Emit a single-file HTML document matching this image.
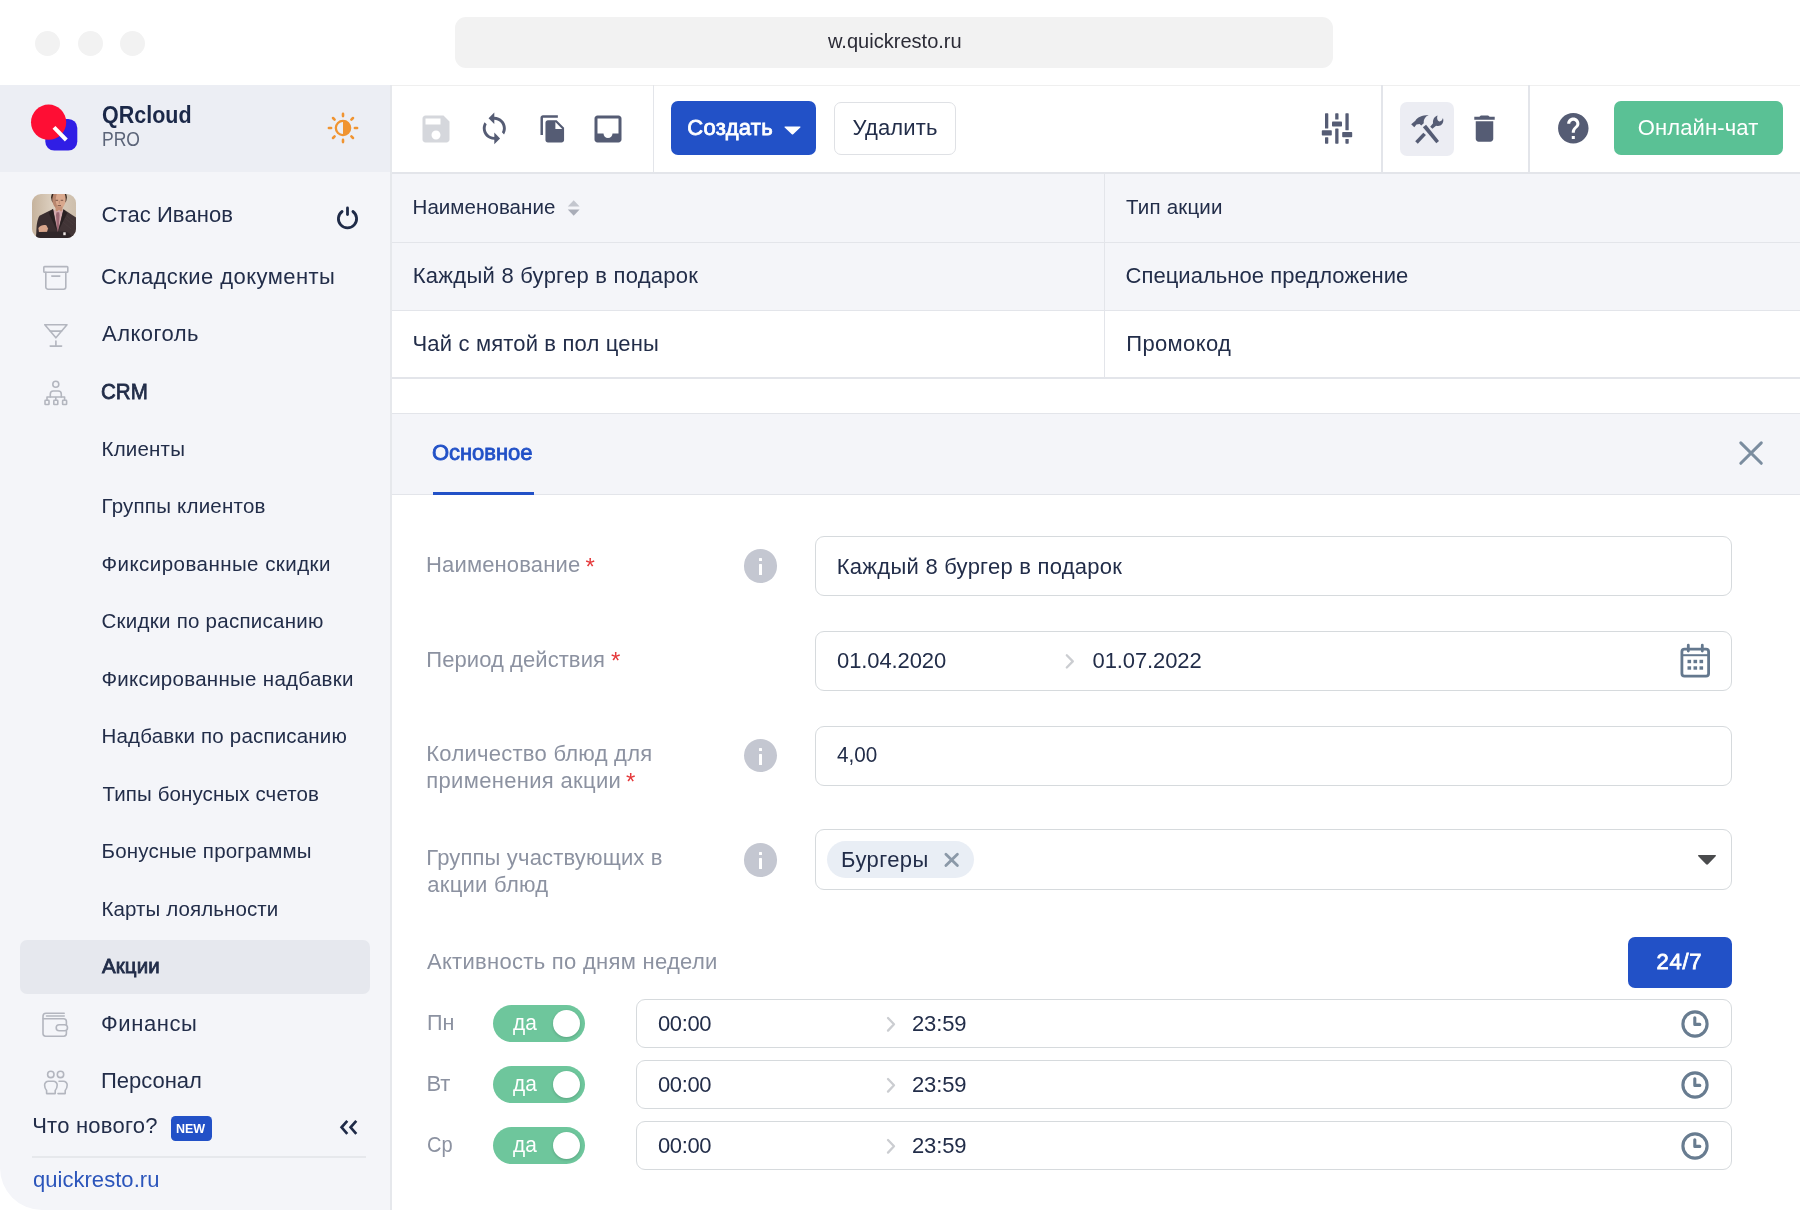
<!DOCTYPE html>
<html lang="ru">
<head>
<meta charset="utf-8">
<title>Quick Resto — Акции</title>
<style>
*{box-sizing:border-box}
html,body{margin:0;padding:0}
body{width:1800px;height:1211px;position:relative;overflow:hidden;background:#fff;font-family:"Liberation Sans",sans-serif;color:#222d49}
.a{position:absolute}
.t{position:absolute;white-space:pre;line-height:30px;display:block}
.txt{position:absolute;left:0;top:0;width:1800px;height:1211px;will-change:transform}
.dot{position:absolute;width:25px;height:25px;border-radius:50%;background:#f2f2f2;top:30.5px}
.url{position:absolute;left:455px;top:17px;width:878px;height:50.500px;border-radius:11px;background:#f2f2f2}
.sidebar{position:absolute;left:0;top:85px;width:392px;height:1125px;background:#f4f5f9;border-right:2px solid #e6e8ec;border-bottom-left-radius:42px;overflow:hidden}
.sidehead{position:absolute;left:0;top:0;width:390px;height:87px;background:#eceef4}
.active{position:absolute;left:20px;top:940px;width:350px;height:54px;border-radius:7px;background:#e6e8ee}
.hline{position:absolute;height:1.5px;background:#e3e5ea}
.vline{position:absolute;width:1.5px;background:#e3e5ea}
.btn{position:absolute;border-radius:7px}
.inp{position:absolute;left:815px;width:917px;border:1.8px solid #d6dadd;border-radius:9px;background:#fff}
.tinp{position:absolute;left:636px;width:1096px;height:49.5px;border:1.8px solid #d6dadd;border-radius:9px;background:#fff}
.tog{position:absolute;left:493px;width:91.5px;height:36.5px;border-radius:19px;background:#6ec69c}
.knob{position:absolute;left:59.5px;top:4.5px;width:27.5px;height:27.5px;border-radius:50%;background:#fff;box-shadow:0 1px 3px rgba(0,0,0,.18)}
.info{position:absolute;left:743.8px;width:33.6px;height:33.6px;border-radius:50%;background:#c4c7d1}
.info i{position:absolute;left:15.1px;width:3.5px;background:#fff;border-radius:.5px}
svg{position:absolute;overflow:visible}

</style>
</head>
<body>
<!-- browser chrome -->
<div class="dot" style="left:35px"></div><div class="dot" style="left:77.5px"></div><div class="dot" style="left:119.5px"></div>
<div class="url"></div>
<div class="hline" style="left:0;top:84.5px;width:1800px;height:1px;background:#efefef"></div>

<!-- sidebar -->
<div class="sidebar"><div class="sidehead"></div></div>
<div class="active"></div>
<!-- logo -->
<svg style="left:28px;top:100px" width="56" height="56" viewBox="28 100 56 56">
  <rect x="45.300" y="118.900" width="32" height="31.700" rx="9" fill="#301ee5"/>
  <circle cx="48.600" cy="122.200" r="17.600" fill="#fe0e34"/>
  <path d="M54 127.400L66.300 140" stroke="#fff" stroke-width="4" stroke-linecap="butt"/>
</svg>
<!-- sun -->
<svg style="left:326px;top:111.400px" width="34" height="34" viewBox="-17 -17 34 34">
  <g stroke="#f09431" stroke-linecap="round" fill="none">
    <circle r="7.150" stroke-width="2.300"/>
    <path d="M0.00 -11.90L0.00 -14.10M8.41 -8.41L9.97 -9.97M11.90 -0.00L14.10 -0.00M8.41 8.41L9.97 9.97M0.00 11.90L0.00 14.10M-8.41 8.41L-9.97 9.97M-11.90 0.00L-14.10 0.00M-8.41 -8.41L-9.97 -9.97" stroke-width="2.600"/>
  </g>
  <path d="M0 -7A7 7 0 0 1 0 7Z" fill="#f09431"/>
</svg>
<!-- avatar -->
<svg style="left:32px;top:194px" width="44" height="44" viewBox="0 0 44 44">
  <defs>
    <clipPath id="avc"><rect width="44" height="44" rx="9"/></clipPath>
    <linearGradient id="avg" x1="0" y1="0" x2="1" y2="0"><stop offset="0" stop-color="#c6b39d"/><stop offset=".45" stop-color="#dccfbf"/><stop offset="1" stop-color="#cdbeac"/></linearGradient>
  </defs>
  <g clip-path="url(#avc)">
    <rect width="44" height="44" fill="url(#avg)"/>
    <ellipse cx="27" cy="3.500" rx="7.900" ry="8" fill="#3a2921"/>
    <path d="M21.600 0H32.800C33.800 3 34 6 33.300 8.500C32.500 12 30 15.300 27.200 15.600C24.200 15.300 21.600 12 20.700 8.500C20.100 6 20.500 3 21.600 0Z" fill="#d9a88d"/>
    <path d="M21.600 0C20.500 3 20.100 6 20.700 8.500C21.600 12 24.200 15.300 27.200 15.600C25.200 13 23.800 10 23.800 6C23.800 3.500 24.300 1.500 24.800 0Z" fill="#9c6a55" opacity=".55"/>
    <path d="M23.600 6.300h2.500M28.700 6.300h2.500M25.700 11.600h3.300" stroke="#4a2e26" stroke-width=".9" opacity=".75" fill="none"/>
    <path d="M27.300 6.800v3" stroke="#a8745f" stroke-width=".8" opacity=".7"/>
    <rect x="23.500" y="12.500" width="7" height="6" fill="#c48f76"/>
    <path d="M21.400 15.600L25 17.500L27 15.800L29 17.500L31.200 15.600L32.500 24L26 40L19.500 24Z" fill="#d3a9ad"/>
    <path d="M24.600 18.300H27.200L27.600 21L26.600 38H25L24 21Z" fill="#9d6874"/>
    <path d="M21 15L7.500 21.800C5.300 25 4 32 4.300 44H26L25.500 37Z" fill="#3a2e30"/>
    <path d="M31.500 15.300L44 23.500V44H26V37Z" fill="#413436"/>
    <path d="M21 15L16.800 19L24.800 36.500Z" fill="#292022"/>
    <path d="M31.500 15.300L35.200 19L26.600 36.500Z" fill="#292022"/>
    <path d="M33 24L41 31M31 28L39 35M35 22L43.500 29.500" stroke="#57484b" stroke-width=".5" opacity=".7"/>
    <path d="M6.400 34C8 31.500 12 30.500 14.500 31.500L16 34.500L15 38L7 38.500Z" fill="#d8a58b"/>
    <path d="M4 44C4 40 5 38.500 7 38L32 37.500C36 37.500 39 40 40 44Z" fill="#30272a"/>
    <rect x="31.300" y="38.300" width="2.400" height="2.900" fill="#efe9e6"/>
  </g>
</svg>
<!-- power -->
<svg style="left:335px;top:205.500px" width="25" height="25" viewBox="-12.500 -12.500 25 25">
  <path d="M-5.400 -7A9.100 9.100 0 1 0 5.400 -7" fill="none" stroke="#1f2b48" stroke-width="2.800" stroke-linecap="round"/>
  <path d="M0 -10.600V-4" stroke="#1f2b48" stroke-width="2.800" stroke-linecap="round"/>
</svg>
<!-- sidebar icons -->
<svg style="left:40px;top:262px" width="32" height="32" viewBox="40 262 32 32" fill="none" stroke="#b3b6bf" stroke-width="1.600" stroke-linejoin="round" stroke-linecap="round">
  <rect x="43.800" y="266.600" width="24" height="5.600" rx=".8"/>
  <path d="M45.800 272.400V287a2.200 2.200 0 0 0 2.200 2.200h15.600a2.200 2.200 0 0 0 2.200-2.200V272.400"/>
  <path d="M51.800 276.100h8"/>
</svg>
<svg style="left:40px;top:320px" width="32" height="32" viewBox="40 320 32 32" fill="none" stroke="#b3b6bf" stroke-width="1.600" stroke-linejoin="round" stroke-linecap="round">
  <path d="M44.800 324.700H67L55.900 337.800z"/>
  <path d="M50.200 331.100H61.600"/>
  <path d="M55.900 341V346M50.200 346.100H61.600"/>
</svg>
<svg style="left:40px;top:378px" width="32" height="32" viewBox="40 378 32 32" fill="none" stroke="#b3b6bf" stroke-width="1.600" stroke-linejoin="round" stroke-linecap="round">
  <circle cx="55.800" cy="384.300" r="3"/>
  <path d="M50.300 397V394a3 3 0 0 1 3-3h5a3 3 0 0 1 3 3V397"/>
  <path d="M47 400V397H64.600V400M55.800 397V400"/>
  <rect x="45" y="400.300" width="4" height="4.200" rx=".6"/><rect x="53.800" y="400.300" width="4" height="4.200" rx=".6"/><rect x="62.600" y="400.300" width="4" height="4.200" rx=".6"/>
</svg>
<svg style="left:40px;top:1008px" width="32" height="32" viewBox="40 1008 32 32" fill="none" stroke="#b3b6bf" stroke-width="1.600" stroke-linejoin="round" stroke-linecap="round">
  <path d="M64.200 1013.300H46a3 3 0 0 0-3 3V1033.600a2.600 2.600 0 0 0 2.600 2.600H63.800a2.600 2.600 0 0 0 2.600-2.600V1031"/>
  <path d="M46.500 1016H64.200"/>
  <path d="M43.200 1018.700H63.600a2.800 2.800 0 0 1 2.800 2.800V1024.600"/>
  <rect x="56.200" y="1024.800" width="11.300" height="6" rx="3"/>
</svg>
<svg style="left:40px;top:1066px" width="32" height="32" viewBox="40 1066 32 32" fill="none" stroke="#b3b6bf" stroke-width="1.600" stroke-linejoin="round" stroke-linecap="round">
  <circle cx="50.800" cy="1074.400" r="3.200"/><circle cx="60.500" cy="1074.400" r="3.200"/>
  <path d="M46.600 1093.600H55.200V1090.500C56.600 1089 57.200 1087 57.200 1085a3.800 3.800 0 0 0-3.800-3.800H48.400A3.800 3.800 0 0 0 44.600 1085c0 2 .6 4 2 5.500z"/>
  <path d="M59 1081.200H63.400A3.800 3.800 0 0 1 67.200 1085c0 2-.6 4-2 5.500V1093.600H58"/>
</svg>
<!-- sidebar footer -->
<div class="a" style="left:170.500px;top:1115.500px;width:41px;height:25px;border-radius:4.500px;background:#2251c7"></div>
<svg style="left:338px;top:1118px" width="22" height="18" viewBox="338 1118 22 18" fill="none" stroke="#1f2b48" stroke-width="2.700" stroke-linecap="butt" stroke-linejoin="miter">
  <path d="M347.300 1120.800L341.600 1127.300L347.300 1133.800M356.300 1120.800L350.600 1127.300L356.300 1133.800"/>
</svg>
<div class="hline" style="left:32px;top:1155.500px;width:334px;height:2px;background:#e6e8ec"></div>

<!-- toolbar -->
<div class="hline" style="left:392px;top:172.200px;width:1408px;height:1.800px"></div>
<div class="vline" style="left:652.500px;top:85px;height:87px"></div>
<div class="vline" style="left:1381px;top:85px;height:87px"></div>
<div class="vline" style="left:1528px;top:85px;height:87px"></div>
<svg style="left:418px;top:110.500px" width="36" height="36" viewBox="0 0 24 24" fill="#d5d7dc"><path d="M17 3H5c-1.110 0-2 .9-2 2v14c0 1.100.890 2 2 2h14c1.100 0 2-.9 2-2V7l-4-4zm-5 16c-1.660 0-3-1.340-3-3s1.340-3 3-3 3 1.340 3 3-1.340 3-3 3zm3-10H5V5h10v4z"/></svg>
<svg style="left:477.300px;top:111px" width="34.600" height="34.600" viewBox="0 0 24 24" fill="#555c74"><path d="M12 4V1L8 5l4 4V6c3.310 0 6 2.690 6 6 0 1.010-.25 1.970-.7 2.800l1.460 1.460C19.540 15.030 20 13.570 20 12c0-4.420-3.580-8-8-8zm0 14c-3.310 0-6-2.690-6-6 0-1.010.25-1.970.7-2.800L5.240 7.740C4.460 8.970 4 10.430 4 12c0 4.420 3.580 8 8 8v3l4-4-4-4v3z"/></svg>
<svg style="left:537.800px;top:113.800px" width="29.800" height="29.800" viewBox="0 0 24 24" fill="#555c74"><path d="M16 1H4c-1.100 0-2 .9-2 2v14h2V3h12V1zm-1 4l6 6v10c0 1.100-.9 2-2 2H7.990C6.890 23 6 22.100 6 21l.010-14c0-1.100.890-2 1.990-2h7zm-1 7h5.500L14 6.500V12z"/></svg>
<svg style="left:590px;top:110.800px" width="36" height="36" viewBox="0 0 24 24" fill="#555c74"><path d="M19 3H4.990c-1.110 0-1.980.9-1.980 2L3 19c0 1.100.880 2 1.990 2H19c1.100 0 2-.9 2-2V5c0-1.100-.9-2-2-2zm0 12h-4c0 1.660-1.350 3-3 3s-3-1.340-3-3H4.990V5H19v10z"/></svg>
<div class="btn" style="left:671px;top:101.400px;width:145.200px;height:53.700px;background:#2251c7"></div>
<svg style="left:783.500px;top:125.500px" width="17" height="9" viewBox="0 0 17 9"><path d="M1.200 .4h14.600c.7 0 1 .7.500 1.200L9.200 8.300c-.4.400-1 .4-1.400 0L.7 1.600C.2 1.100.5.400 1.200.4z" fill="#fff"/></svg>
<div class="btn" style="left:833.500px;top:101.500px;width:122.700px;height:53.600px;background:#fff;border:1.600px solid #dfe1e5"></div>
<!-- sliders -->
<svg style="left:1320px;top:112px" width="34" height="34" viewBox="1320 112 34 34" fill="#555c74">
  <rect x="1325" y="113.300" width="3.300" height="15.200" rx=".6"/><rect x="1325" y="137.200" width="3.300" height="6.500" rx=".6"/><rect x="1321.800" y="130.300" width="10" height="5.200" rx=".8"/>
  <rect x="1335.200" y="113.300" width="3.300" height="6.200" rx=".6"/><rect x="1335.200" y="128.500" width="3.300" height="15.200" rx=".6"/><rect x="1332" y="121.400" width="10" height="5.200" rx=".8"/>
  <rect x="1345.400" y="113.300" width="3.300" height="17" rx=".6"/><rect x="1345.400" y="139" width="3.300" height="4.700" rx=".6"/><rect x="1342.200" y="132" width="10" height="5.200" rx=".8"/>
</svg>
<div class="btn" style="left:1399.500px;top:101.500px;width:54px;height:54px;background:#ecedf3"></div>
<svg style="left:1400px;top:105px" width="55" height="47" viewBox="0 0 1417 1211" fill="#555c74">
  <path d="M288 495L395 405C440 330 560 262 738 260C655 300 605 365 612 470L548 528L505 490L425 502L368 572Z"/>
  <path d="M590 572L672 508L1005 925L935 988Z"/>
  <path d="M778 562L852 468C838 380 880 300 968 268C945 330 955 398 1010 424C1060 430 1092 392 1106 338C1136 420 1102 500 1040 530C1000 546 962 542 930 536L835 612Z"/>
  <path d="M392 932L600 712L668 776L458 1000Z"/>
</svg>
<svg style="left:1466.500px;top:110.800px" width="35" height="35" viewBox="0 0 24 24" fill="#555c74"><path d="M6 19c0 1.100.9 2 2 2h8c1.100 0 2-.9 2-2V7H6v12zM19 4h-3.500l-1-1h-5l-1 1H5v2h14V4z"/></svg>
<svg style="left:1555px;top:110px" width="36.600" height="36.600" viewBox="0 0 24 24" fill="#555c74"><path d="M12 2C6.480 2 2 6.480 2 12s4.480 10 10 10 10-4.480 10-10S17.520 2 12 2zm1 17h-2v-2h2v2zm2.070-7.750l-.9.920C13.450 12.900 13 13.500 13 15h-2v-.5c0-1.100.45-2.100 1.170-2.830l1.240-1.260c.37-.36.590-.86.590-1.410 0-1.100-.9-2-2-2s-2 .9-2 2H8c0-2.210 1.790-4 4-4s4 1.790 4 4c0 .88-.36 1.680-.93 2.250z"/></svg>
<div class="btn" style="left:1614.100px;top:101.300px;width:169.100px;height:53.900px;background:#5ac195"></div>

<!-- table -->
<div class="a" style="left:392px;top:173.500px;width:1408px;height:136px;background:#f4f5f9"></div>
<div class="hline" style="left:392px;top:241.800px;width:1408px"></div>
<div class="hline" style="left:392px;top:309.500px;width:1408px"></div>
<div class="hline" style="left:392px;top:377px;width:1408px"></div>
<div class="vline" style="left:1103.800px;top:173px;height:204px"></div>
<svg style="left:566px;top:199px" width="15" height="18" viewBox="566 199 15 18"><path d="M573.700 200.300L579.600 206.600H567.800z" fill="#c3c6ce"/><path d="M573.700 215.700L579.600 209.400H567.800z" fill="#a9adb8"/></svg>

<!-- panel -->
<div class="a" style="left:392px;top:412.500px;width:1408px;height:82px;background:#f4f5f9;border-top:1.500px solid #e3e5ea;border-bottom:1.500px solid #e3e5ea"></div>
<div class="a" style="left:433px;top:491.500px;width:101.300px;height:3.500px;background:#2251c7"></div>
<svg style="left:1738px;top:440px" width="26" height="26" viewBox="1738 440 26 26" fill="none" stroke="#7b8d9f" stroke-width="3" stroke-linecap="round"><path d="M1740.800 442.900L1761.300 463.300M1761.300 442.900L1740.800 463.300"/></svg>

<div class="info" style="top:549.1px"><i style="top:9.100px;height:2.600px"></i><i style="top:15px;height:10.700px"></i></div>
<div class="info" style="top:738.9px"><i style="top:9.100px;height:2.600px"></i><i style="top:15px;height:10.700px"></i></div>
<div class="info" style="top:843.3px"><i style="top:9.100px;height:2.600px"></i><i style="top:15px;height:10.700px"></i></div>

<div class="inp" style="top:536px;height:60.3px"></div>
<div class="inp" style="top:630.600px;height:60.3px"></div>
<div class="inp" style="top:725.500px;height:60.3px"></div>
<div class="inp" style="top:829.400px;height:60.3px"></div>
<!-- range chevron -->
<svg style="left:1064px;top:653px" width="12" height="17" viewBox="1064 653 12 17" fill="none" stroke="#cbcdd1" stroke-width="2.300" stroke-linecap="round" stroke-linejoin="round"><path d="M1066.800 655.300L1072.800 661.400L1066.800 667.500"/></svg>
<!-- calendar -->
<svg style="left:1679px;top:643px" width="33" height="36" viewBox="1679 643 33 36" fill="none" stroke="#64788e" stroke-linejoin="round">
  <rect x="1681.900" y="649.200" width="26.700" height="27" rx="2.600" stroke-width="2.800"/>
  <path d="M1688.300 645.200V651M1702.300 645.200V651" stroke-width="2.800" stroke-linecap="round"/>
  <path d="M1681.900 655.200H1708.600" stroke-width="2"/>
  <g fill="#64788e" stroke="none"><rect x="1687.500" y="659.800" width="3.600" height="3.400"/><rect x="1693.500" y="659.800" width="3.600" height="3.400"/><rect x="1699.500" y="659.800" width="3.600" height="3.400"/><rect x="1687.500" y="666.300" width="3.600" height="3.400"/><rect x="1693.500" y="666.300" width="3.600" height="3.400"/><rect x="1699.500" y="666.300" width="3.600" height="3.400"/></g>
</svg>
<!-- chip -->
<div class="a" style="left:826.800px;top:841.300px;width:147.500px;height:36.800px;border-radius:18.500px;background:#e9eef5"></div>
<svg style="left:943px;top:851px" width="17" height="17" viewBox="943 851 17 17" fill="none" stroke="#8b99a8" stroke-width="2.800" stroke-linecap="round"><path d="M945.900 854.200L957.400 865.500M957.400 854.200L945.900 865.500"/></svg>
<svg style="left:1697px;top:853.500px" width="20" height="12" viewBox="0 0 20 12"><path d="M1.800 1h16.400c.7 0 1 .7.500 1.200l-7.700 8.100c-.5.500-1.400.5-1.900 0L1.300 2.200C.8 1.700 1.100 1 1.800 1z" fill="#4a4b4d"/></svg>

<div class="btn" style="left:1627.500px;top:937px;width:104.500px;height:50.500px;background:#2251c7"></div>
<!-- weekday rows -->
<div class="tinp" style="top:998.5px"></div>
<div class="tog" style="top:1005.0px"><div class="knob"></div></div>
<svg style="left:1680px;top:1008.7px" width="30" height="30" viewBox="-15 -15 30 30" fill="none" stroke="#687c90" stroke-width="3.100" stroke-linecap="round" stroke-linejoin="round"><circle r="12.100"/><path d="M-.2 -6.300V.4H4.800"/></svg>
<svg style="left:885px;top:1015.2px" width="12" height="18" viewBox="0 0 12 18" fill="none" stroke="#cbcdd1" stroke-width="2.300" stroke-linecap="round" stroke-linejoin="round"><path d="M3 3L9 9.300L3 15.600"/></svg>
<div class="tinp" style="top:1059.5px"></div>
<div class="tog" style="top:1066.0px"><div class="knob"></div></div>
<svg style="left:1680px;top:1069.7px" width="30" height="30" viewBox="-15 -15 30 30" fill="none" stroke="#687c90" stroke-width="3.100" stroke-linecap="round" stroke-linejoin="round"><circle r="12.100"/><path d="M-.2 -6.300V.4H4.800"/></svg>
<svg style="left:885px;top:1076.2px" width="12" height="18" viewBox="0 0 12 18" fill="none" stroke="#cbcdd1" stroke-width="2.300" stroke-linecap="round" stroke-linejoin="round"><path d="M3 3L9 9.300L3 15.600"/></svg>
<div class="tinp" style="top:1120.5px"></div>
<div class="tog" style="top:1127.0px"><div class="knob"></div></div>
<svg style="left:1680px;top:1130.7px" width="30" height="30" viewBox="-15 -15 30 30" fill="none" stroke="#687c90" stroke-width="3.100" stroke-linecap="round" stroke-linejoin="round"><circle r="12.100"/><path d="M-.2 -6.300V.4H4.800"/></svg>
<svg style="left:885px;top:1137.2px" width="12" height="18" viewBox="0 0 12 18" fill="none" stroke="#cbcdd1" stroke-width="2.300" stroke-linecap="round" stroke-linejoin="round"><path d="M3 3L9 9.300L3 15.600"/></svg>

<!-- text layer -->
<div class="txt">
<span class="t" style="left:827.65px;top:26px;font-size:21px;color:#2b2b36;transform:scaleX(0.9546);transform-origin:0 0;">w.quickresto.ru</span>
<span class="t" style="left:102.00px;top:100px;font-size:23px;color:#1b2848;font-weight:700;transform:scaleX(0.9348);transform-origin:0 0;">QRcloud</span>
<span class="t" style="left:101.80px;top:124px;font-size:19.4px;color:#5b6478;transform:scaleX(0.9038);transform-origin:0 0;">PRO</span>
<span class="t" style="left:101.50px;top:200px;font-size:22px;color:#222d49;letter-spacing:0.081px;">Стас Иванов</span>
<span class="t" style="left:101.00px;top:262px;font-size:22px;color:#222d49;letter-spacing:0.433px;">Складские документы</span>
<span class="t" style="left:102.00px;top:319px;font-size:22px;color:#222d49;letter-spacing:0.465px;">Алкоголь</span>
<span class="t" style="left:101.07px;top:377px;font-size:22px;color:#222d49;-webkit-text-stroke:0.8px currentColor;transform:scaleX(0.9326);transform-origin:0 0;">CRM</span>
<span class="t" style="left:101.50px;top:434px;font-size:20.5px;color:#222d49;letter-spacing:0.206px;">Клиенты</span>
<span class="t" style="left:101.50px;top:491px;font-size:20.5px;color:#222d49;letter-spacing:0.222px;">Группы клиентов</span>
<span class="t" style="left:101.50px;top:549px;font-size:20.5px;color:#222d49;letter-spacing:0.454px;">Фиксированные скидки</span>
<span class="t" style="left:101.50px;top:606px;font-size:20.5px;color:#222d49;letter-spacing:0.262px;">Скидки по расписанию</span>
<span class="t" style="left:101.50px;top:664px;font-size:20.5px;color:#222d49;letter-spacing:0.286px;">Фиксированные надбавки</span>
<span class="t" style="left:101.50px;top:721px;font-size:20.5px;color:#222d49;letter-spacing:0.187px;">Надбавки по расписанию</span>
<span class="t" style="left:102.50px;top:779px;font-size:20.5px;color:#222d49;letter-spacing:0.115px;">Типы бонусных счетов</span>
<span class="t" style="left:101.50px;top:836px;font-size:20.5px;color:#222d49;letter-spacing:0.196px;">Бонусные программы</span>
<span class="t" style="left:101.50px;top:894px;font-size:20.5px;color:#222d49;letter-spacing:0.093px;">Карты лояльности</span>
<span class="t" style="left:102.00px;top:951px;font-size:20.5px;color:#222d49;-webkit-text-stroke:0.8px currentColor;letter-spacing:0.091px;">Акции</span>
<span class="t" style="left:101.00px;top:1009px;font-size:22px;color:#222d49;letter-spacing:0.575px;">Финансы</span>
<span class="t" style="left:101.00px;top:1066px;font-size:22px;color:#222d49;letter-spacing:-0.021px;">Персонал</span>
<span class="t" style="left:32.20px;top:1111px;font-size:22px;color:#222d49;letter-spacing:0.232px;">Что нового?</span>
<span class="t" style="left:176.00px;top:1114px;font-size:13.5px;color:#fff;font-weight:700;transform:scaleX(0.9259);transform-origin:0 0;">NEW</span>
<span class="t" style="left:32.90px;top:1165px;font-size:22px;color:#2b55bb;letter-spacing:0.049px;">quickresto.ru</span>
<span class="t" style="left:687.30px;top:113px;font-size:22px;color:#fff;-webkit-text-stroke:0.8px currentColor;letter-spacing:0.293px;">Создать</span>
<span class="t" style="left:852.50px;top:113px;font-size:22px;color:#222d49;letter-spacing:0.161px;">Удалить</span>
<span class="t" style="left:1637.70px;top:113px;font-size:22px;color:#fff;letter-spacing:0.132px;">Онлайн-чат</span>
<span class="t" style="left:412.50px;top:192px;font-size:20.5px;color:#222d49;letter-spacing:0.072px;">Наименование</span>
<span class="t" style="left:1126.00px;top:192px;font-size:20.5px;color:#222d49;letter-spacing:0.196px;">Тип акции</span>
<span class="t" style="left:412.80px;top:261px;font-size:22px;color:#222d49;letter-spacing:0.254px;">Каждый 8 бургер в подарок</span>
<span class="t" style="left:1125.50px;top:261px;font-size:22px;color:#222d49;letter-spacing:0.050px;">Специальное предложение</span>
<span class="t" style="left:412.50px;top:329px;font-size:22px;color:#222d49;letter-spacing:0.163px;">Чай с мятой в пол цены</span>
<span class="t" style="left:1126.30px;top:329px;font-size:22px;color:#222d49;letter-spacing:0.347px;">Промокод</span>
<span class="t" style="left:432.00px;top:438px;font-size:22px;color:#2251c7;-webkit-text-stroke:0.8px currentColor;letter-spacing:-0.053px;">Основное</span>
<span class="t" style="left:426.00px;top:550px;font-size:22px;color:#8c92a1;letter-spacing:0.157px;">Наименование</span>
<span class="t" style="left:426.30px;top:645px;font-size:22px;color:#8c92a1;letter-spacing:0.072px;">Период действия</span>
<span class="t" style="left:426.30px;top:739px;font-size:22px;color:#8c92a1;letter-spacing:0.259px;">Количество блюд для</span>
<span class="t" style="left:426.30px;top:766px;font-size:22px;color:#8c92a1;letter-spacing:0.327px;">применения акции</span>
<span class="t" style="left:426.30px;top:843px;font-size:22px;color:#8c92a1;letter-spacing:0.163px;">Группы участвующих в</span>
<span class="t" style="left:427.30px;top:870px;font-size:22px;color:#8c92a1;letter-spacing:0.265px;">акции блюд</span>
<span class="t" style="left:427.00px;top:947px;font-size:22px;color:#8c92a1;letter-spacing:0.287px;">Активность по дням недели</span>
<span class="t" style="left:426.52px;top:1008px;font-size:22px;color:#8c92a1;transform:scaleX(0.9801);transform-origin:0 0;">Пн</span>
<span class="t" style="left:513.00px;top:1008px;font-size:21.5px;color:#fff;transform:scaleX(0.9696);transform-origin:0 0;">да</span>
<span class="t" style="left:658.00px;top:1009px;font-size:22px;color:#222d49;letter-spacing:-0.392px;">00:00</span>
<span class="t" style="left:912.00px;top:1009px;font-size:22px;color:#222d49;letter-spacing:-0.142px;">23:59</span>
<span class="t" style="left:426.50px;top:1069px;font-size:22px;color:#8c92a1;letter-spacing:-0.193px;">Вт</span>
<span class="t" style="left:513.00px;top:1069px;font-size:21.5px;color:#fff;transform:scaleX(0.9696);transform-origin:0 0;">да</span>
<span class="t" style="left:658.00px;top:1070px;font-size:22px;color:#222d49;letter-spacing:-0.392px;">00:00</span>
<span class="t" style="left:912.00px;top:1070px;font-size:22px;color:#222d49;letter-spacing:-0.142px;">23:59</span>
<span class="t" style="left:426.59px;top:1130px;font-size:22px;color:#8c92a1;transform:scaleX(0.9112);transform-origin:0 0;">Ср</span>
<span class="t" style="left:513.00px;top:1130px;font-size:21.5px;color:#fff;transform:scaleX(0.9696);transform-origin:0 0;">да</span>
<span class="t" style="left:658.00px;top:1131px;font-size:22px;color:#222d49;letter-spacing:-0.392px;">00:00</span>
<span class="t" style="left:912.00px;top:1131px;font-size:22px;color:#222d49;letter-spacing:-0.142px;">23:59</span>
<span class="t" style="left:836.80px;top:552px;font-size:22px;color:#222d49;letter-spacing:0.254px;">Каждый 8 бургер в подарок</span>
<span class="t" style="left:837.00px;top:646px;font-size:22px;color:#222d49;letter-spacing:-0.097px;">01.04.2020</span>
<span class="t" style="left:1092.50px;top:646px;font-size:22px;color:#222d49;letter-spacing:-0.097px;">01.07.2022</span>
<span class="t" style="left:837.00px;top:740px;font-size:22px;color:#222d49;transform:scaleX(0.9393);transform-origin:0 0;">4,00</span>
<span class="t" style="left:841.00px;top:845px;font-size:22px;color:#222d49;letter-spacing:0.424px;">Бургеры</span>
<span class="t" style="left:1656.50px;top:947px;font-size:22px;color:#fff;-webkit-text-stroke:0.8px currentColor;letter-spacing:0.706px;">24/7</span>
<span class="t" style="left:585.50px;top:552px;font-size:24px;color:#e5393b;">*</span>
<span class="t" style="left:610.90px;top:646px;font-size:24px;color:#e5393b;">*</span>
<span class="t" style="left:626.00px;top:767px;font-size:24px;color:#e5393b;">*</span>
</div>
</body>
</html>
